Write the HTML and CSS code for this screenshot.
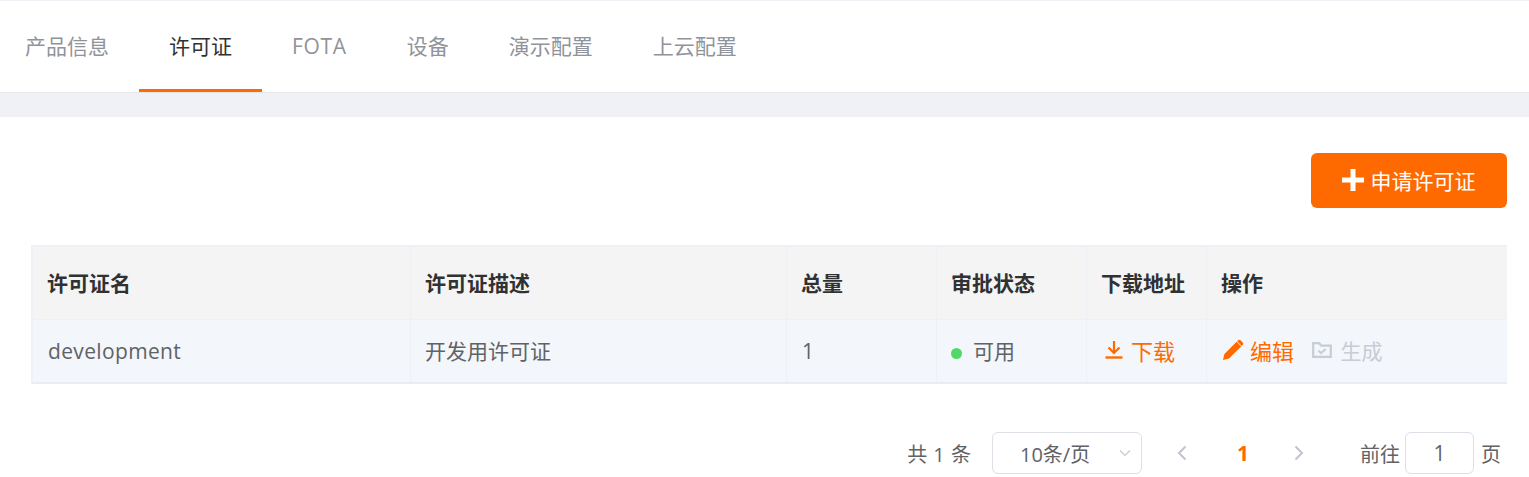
FILE: index.html
```html
<!DOCTYPE html>
<html lang="zh-CN">
<head>
<meta charset="UTF-8" />
<title>许可证</title>
<link rel="stylesheet" href="styles.css">
</head>
<body>
<nav class="tabs">
  <a class="tab">产品信息</a>
  <a class="tab active">许可证</a>
  <a class="tab latin">FOTA</a>
  <a class="tab">设备</a>
  <a class="tab">演示配置</a>
  <a class="tab">上云配置</a>
</nav>
<div class="band"></div>
<main class="content">
  <div class="toolbar">
    <button class="add-btn" type="button">
      <svg class="plus" width="22" height="22" viewBox="0 0 22 22"><path d="M8.500 0h5v8.500H22v5h-8.500V22h-5v-8.500H0v-5h8.500z" fill="#fff"/></svg>
      <span>申请许可证</span>
    </button>
  </div>
  <table class="grid">
    <colgroup>
      <col class="c-name"><col class="c-desc"><col class="c-total"><col class="c-status"><col class="c-url"><col class="c-op">
    </colgroup>
    <thead>
      <tr>
        <th>许可证名</th>
        <th>许可证描述</th>
        <th>总量</th>
        <th>审批状态</th>
        <th>下载地址</th>
        <th>操作</th>
      </tr>
    </thead>
    <tbody>
      <tr>
        <td class="name">development</td>
        <td>开发用许可证</td>
        <td class="name">1</td>
        <td><span class="dot"></span>可用</td>
        <td>
          <a class="link download">
            <svg width="18" height="18" viewBox="0 0 18 18"><path d="M9 0v11M3.500 6.500L9 12l5.500-5.500" fill="none" stroke="#ff6a00" stroke-width="2.200"/><path d="M0.500 16.500h17" stroke="#ff6a00" stroke-width="2.400"/></svg>
            下载
          </a>
        </td>
        <td>
          <a class="link edit">
            <svg width="22" height="22" viewBox="0 0 22 22"><path d="M1 21l1.400-6L14.600 2.800l4.600 4.600L7 19.600zM16 1.400a2 2 0 0 1 2.800 0l1.800 1.800a2 2 0 0 1 0 2.800l-.9.9-4.600-4.600z" fill="#ff6a00"/></svg>
            编辑
          </a>
          <a class="link off">
            <svg width="20" height="18" viewBox="0 0 20 18"><path d="M1.200 15.800V2.200h6l2 2.400h9.600v11.200z" fill="none" stroke="#c8ccd4" stroke-width="2.200"/><path d="M6.500 9.500l2.600 2.600 4.600-4.200" fill="none" stroke="#c8ccd4" stroke-width="2"/></svg>
            生成
          </a>
        </td>
      </tr>
    </tbody>
  </table>
  <div class="pager">
    <span class="total">共 1 条</span>
    <div class="size-select">
      <span>10条/页</span>
      <svg width="12" height="8" viewBox="0 0 12 8"><path d="M1 1.500l5 5 5-5" fill="none" stroke="#c6c9d2" stroke-width="1.200"/></svg>
    </div>
    <svg class="arrow" width="10" height="16" viewBox="0 0 10 16"><path d="M8.500 1.500L2 8l6.500 6.500" fill="none" stroke="#c0c4cc" stroke-width="2"/></svg>
    <span class="page-num">1</span>
    <svg class="arrow" width="10" height="16" viewBox="0 0 10 16"><path d="M1.500 1.500L8 8l-6.500 6.500" fill="none" stroke="#c0c4cc" stroke-width="2"/></svg>
    <span class="jump">前往</span>
    <div class="page-input">1</div>
    <span class="unit">页</span>
  </div>
</main>
</body>
</html>
```

FILE: styles.css
```css
* {
  box-sizing: border-box;
}
body {
  margin: 0;
  height: 477px;
  overflow: hidden;
  background: #fff;
  color: #606266;
  font-family: "Open Sans", "Noto Sans CJK SC", sans-serif;
  font-size: 21px;
}
a {
  text-decoration: none;
}

/* tabs */
.tabs {
  display: flex;
  height: 93px;
  padding-left: 25px;
  border-top: 1px solid #f0f1f6;
  border-bottom: 1px solid #e6e6e6;
}
.tab {
  height: 91px;
  padding: 0 30px;
  line-height: 91px;
  color: #909399;
}
.tab:first-child {
  padding-left: 0;
}
.tab.latin {
  letter-spacing: 0.7px;
}
.tab.active {
  color: #303133;
  border-bottom: 3px solid #ff6a00;
}
.band {
  height: 24px;
  background: #f0f1f6;
}

.content {
  padding: 36px 22px 0 31px;
}
.toolbar {
  display: flex;
  justify-content: flex-end;
}
.add-btn {
  display: flex;
  align-items: center;
  justify-content: center;
  gap: 7px;
  width: 196px;
  height: 55px;
  padding: 0 1px 2px 0;
  border: none;
  border-radius: 6px;
  background: #ff6a00;
  color: #fff;
  font: inherit;
}

/* table */
.grid {
  width: 1476px;
  margin-top: 37px;
  border-collapse: separate;
  border-spacing: 0;
  table-layout: fixed;
  border-top: 2px solid #f0f1f6;
  border-left: 2px solid #f0f1f6;
  border-bottom: 2px solid #e9edf3;
}
.c-name { width: 378px; }
.c-desc { width: 376px; }
.c-total { width: 150px; }
.c-status { width: 150px; }
.c-url { width: 120px; }
.c-op { width: 300px; }
.grid th, .grid td {
  padding: 0 14px;
  text-align: left;
  border-right: 1px solid #edf0f5;
  white-space: nowrap;
}
.grid th:last-child, .grid td:last-child {
  border-right: none;
}
.grid th {
  height: 73px;
  padding-bottom: 2px;
  background: #f4f4f5;
  color: #303133;
  font-weight: 700;
  border-bottom: 1px solid #edf0f5;
}
.grid td {
  height: 62px;
  padding-bottom: 2px;
  background: #f3f6fa;
}
.grid td.name {
  padding-left: 15px;
  padding-bottom: 0;
  letter-spacing: 0.35px;
}
.dot {
  display: inline-block;
  width: 11px;
  height: 11px;
  margin-right: 11px;
  border-radius: 50%;
  background: #52d869;
}
.link {
  display: inline-flex;
  align-items: center;
  gap: 8px;
  color: #ff6a00;
  font-size: 22px;
  vertical-align: middle;
}
.link svg {
  flex: none;
}
.link.download {
  margin-left: 4px;
}
.link.edit {
  margin-left: 1px;
  gap: 6px;
}
.link.off {
  margin-left: 13px;
  color: #c8ccd4;
  font-size: 21px;
}

/* pagination */
.pager {
  display: flex;
  align-items: center;
  justify-content: flex-end;
  height: 42px;
  margin-top: 48px;
  margin-right: -22px;
  padding-right: 28px;
  font-size: 20px;
}
.total {
  margin-right: 21px;
  word-spacing: 1px;
}
.size-select {
  display: flex;
  align-items: center;
  justify-content: space-between;
  width: 150px;
  height: 42px;
  padding: 0 10px 0 27px;
  border: 1px solid #dcdfe6;
  border-radius: 6px;
}
.arrow {
  margin-left: 35px;
}
.page-num {
  margin-left: 50px;
  margin-right: 4px;
  color: #ff6a00;
  font-size: 21px;
  font-weight: 700;
}
.page-num + .arrow {
  margin-left: 41px;
}
.jump {
  margin-left: 56px;
  margin-right: 5px;
}
.page-input {
  width: 69px;
  height: 42px;
  line-height: 40px;
  font-size: 21px;
  text-align: center;
  border: 1px solid #dcdfe6;
  border-radius: 6px;
}
.unit {
  margin-left: 7px;
}
```
